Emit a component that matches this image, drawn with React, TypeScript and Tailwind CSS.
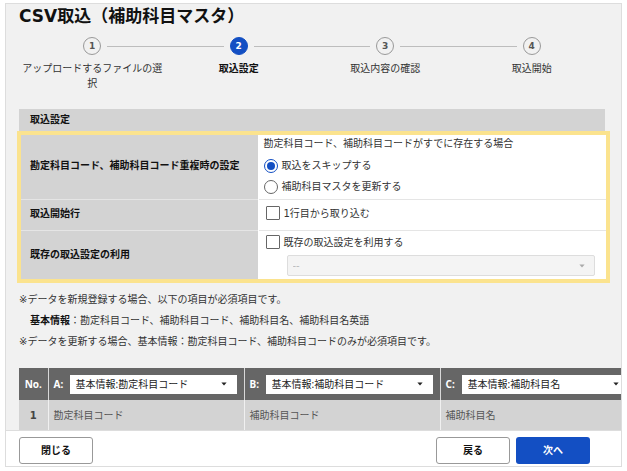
import React, { useState } from 'react';
import clsx from 'clsx';

const STEPS = ['アップロードするファイルの選択', '取込設定', '取込内容の確認', '取込開始'];
const CURRENT_STEP = 1;

const FIELDS = ['勘定科目コード', '補助科目コード', '補助科目名', '補助科目名英語'];

const COLUMNS = [
  { key: 'A', field: '勘定科目コード' },
  { key: 'B', field: '補助科目コード' },
  { key: 'C', field: '補助科目名' },
];

const Caret = ({ className }: { className: string }) => (
  <svg viewBox="0 0 6 4" className={clsx('pointer-events-none absolute top-1/2 h-1 w-1.5 -translate-y-1/2', className)} aria-hidden="true">
    <path d="M0.4 0.4h5.2L3 3.6z" fill="currentColor" />
  </svg>
);

const Stepper = () => (
  <ol className="mt-2 grid grid-cols-4">
    {STEPS.map((label, i) => {
      const active = i === CURRENT_STEP;
      return (
        <li key={label} aria-current={active ? 'step' : undefined}>
          <div className="flex items-center">
            <span className={clsx('h-px flex-1', i > 0 && 'bg-[#bdbdbd]')}></span>
            <span
              className={clsx(
                'mx-1.5 flex size-[18px] items-center justify-center rounded-full border text-[9px] leading-none font-bold',
                active ? 'border-[#134fc3] bg-[#134fc3] text-white' : 'border-[#999] text-[#555]'
              )}
            >
              {i + 1}
            </span>
            <span className={clsx('h-px flex-1', i < STEPS.length - 1 && 'bg-[#bdbdbd]')}></span>
          </div>
          <p className={clsx('mt-1.5 text-center leading-[15px]', active && 'font-bold text-[#111]')}>{label}</p>
        </li>
      );
    })}
  </ol>
);

const Radio = ({ label, checked, onChange }: { label: string; checked: boolean; onChange: () => void }) => (
  <label className="flex h-[21px] items-center gap-1">
    <input
      type="radio"
      name="duplicate"
      checked={checked}
      onChange={onChange}
      className="size-[14px] appearance-none rounded-full border border-[#666] bg-white p-[2px] checked:border-[#134fc3] checked:bg-[#134fc3] checked:bg-clip-content"
    />
    {label}
  </label>
);

const Checkbox = ({ label, checked, onChange }: { label: string; checked: boolean; onChange: () => void }) => (
  <label className="ml-[2px] flex h-[22px] items-center gap-1">
    <input
      type="checkbox"
      checked={checked}
      onChange={onChange}
      className="size-[14px] appearance-none rounded-[1px] border border-[#666] bg-white checked:border-[#134fc3] checked:bg-[#134fc3]"
    />
    {label}
  </label>
);

const SettingsTable = () => {
  const [mode, setMode] = useState<'skip' | 'update'>('skip');
  const [fromFirstRow, setFromFirstRow] = useState(false);
  const [useExisting, setUseExisting] = useState(false);

  return (
    <div className="-mr-[5px] -ml-[2px] border-4 border-[#fbe38e] bg-white">
      <table className="w-full table-fixed border-collapse">
        <tbody>
          <tr className="border-b border-[#e5e5e5]">
            <th scope="row" className="w-[237px] border-r border-white bg-[#d3d3d3] pb-1 pl-[9px] text-left font-bold text-[#111]">
              勘定科目コード、補助科目コード重複時の設定
            </th>
            <td className="pr-2 pb-[2px] pl-[5px]">
              <fieldset>
                <legend className="mb-[2px] leading-[18px]">勘定科目コード、補助科目コードがすでに存在する場合</legend>
                <Radio label="取込をスキップする" checked={mode === 'skip'} onChange={() => setMode('skip')} />
                <Radio label="補助科目マスタを更新する" checked={mode === 'update'} onChange={() => setMode('update')} />
              </fieldset>
            </td>
          </tr>
          <tr className="border-b border-[#e5e5e5]">
            <th scope="row" className="border-r border-white bg-[#d3d3d3] pb-1 pl-[9px] text-left font-bold text-[#111]">
              取込開始行
            </th>
            <td className="pt-[2px] pr-2 pb-1.5 pl-[5px]">
              <Checkbox label="1行目から取り込む" checked={fromFirstRow} onChange={() => setFromFirstRow(!fromFirstRow)} />
            </td>
          </tr>
          <tr>
            <th scope="row" className="border-r border-white bg-[#d3d3d3] pb-[2px] pl-[9px] text-left font-bold text-[#111]">
              既存の取込設定の利用
            </th>
            <td className="pr-[11px] pb-[3px] pl-[5px]">
              <Checkbox label="既存の取込設定を利用する" checked={useExisting} onChange={() => setUseExisting(!useExisting)} />
              <div className="relative mt-[2px] ml-[23px]">
                <select
                  aria-label="既存の取込設定"
                  disabled={!useExisting}
                  className="block h-[21px] w-full appearance-none rounded-[2px] border border-[#ddd] bg-[#f4f4f4] px-[5px] text-[#bbb]"
                >
                  <option>--</option>
                </select>
                <Caret className="right-2.5 text-[#aaa]" />
              </div>
            </td>
          </tr>
        </tbody>
      </table>
    </div>
  );
};

const MappingTable = () => (
  <div className="mt-4 -mr-4 overflow-hidden">
    <table className="w-[617px] table-fixed border-collapse">
      <thead>
        <tr className="h-8 bg-[#666] font-['Noto_Sans','Noto_Sans_CJK_JP',sans-serif] text-white">
          <th scope="col" className="w-[29px] font-bold">No.</th>
          {COLUMNS.map((col) => (
            <th key={col.key} scope="col" className="w-[196px] border-l border-[#d8d8d8] pr-[7px] pl-[5px] font-bold">
              <div className="flex items-center">
                <label htmlFor={`col-${col.key}`} className="w-4 text-left">{col.key}:</label>
                <div className="relative flex-1">
                  <select
                    id={`col-${col.key}`}
                    defaultValue={col.field}
                    className="block h-[19px] w-full appearance-none bg-white px-1.5 font-normal text-[#222]"
                  >
                    {FIELDS.map((f) => (
                      <option key={f} value={f}>基本情報:{f}</option>
                    ))}
                  </select>
                  <Caret className="right-2.5 text-[#222]" />
                </div>
              </div>
            </th>
          ))}
        </tr>
      </thead>
      <tbody>
        <tr className="h-[30px] bg-[#d3d3d3] text-[#555]">
          <th scope="row" className="font-bold text-[#444]">1</th>
          {COLUMNS.map((col) => (
            <td key={col.key} className="border-l border-[#f0f0f0] px-[5px]">{col.field}</td>
          ))}
        </tr>
      </tbody>
    </table>
  </div>
);

export default function App() {
  return (
    <div className="bg-white px-[5px] pt-[3px] pb-1 font-['DejaVu_Sans','Noto_Sans_CJK_JP',sans-serif] text-[10px] leading-[15px] text-[#333]">
      <div className="overflow-hidden border border-[#ddd] bg-[#f1f1f1]">
        <main className="pr-4 pl-[13px]">
          <h1 className="text-[17px] leading-[25px] font-bold text-[#111]">CSV取込（補助科目マスタ）</h1>

          <Stepper />

          <h2 className="mt-[18px] bg-[#d3d3d3] pl-[11px] leading-[22px] font-bold text-[#111]">取込設定</h2>
          <SettingsTable />

          {/* Notes */}
          <div className="mt-1.5 leading-[21px]">
            <p>※データを新規登録する場合、以下の項目が必須項目です。</p>
            <p className="pl-[11px]">
              <strong className="font-bold text-[#111]">基本情報</strong>：勘定科目コード、補助科目コード、補助科目名、補助科目名英語
            </p>
            <p>※データを更新する場合、基本情報：勘定科目コード、補助科目コードのみが必須項目です。</p>
          </div>

          <MappingTable />
        </main>

        {/* Footer */}
        <footer className="flex items-center gap-1.5 border-t border-[#ddd] bg-white pt-1.5 pr-[31px] pb-[2px] pl-[13px] font-bold text-[#111]">
          <button type="button" className="mr-auto h-[27px] w-[74px] rounded-[3px] border border-[#999] bg-white">閉じる</button>
          <button type="button" className="h-[27px] w-[74px] rounded-[3px] border border-[#999] bg-white">戻る</button>
          <button type="button" className="h-[27px] w-[74px] rounded-[3px] bg-[#134fc3] text-white">次へ</button>
        </footer>
      </div>
    </div>
  );
}
